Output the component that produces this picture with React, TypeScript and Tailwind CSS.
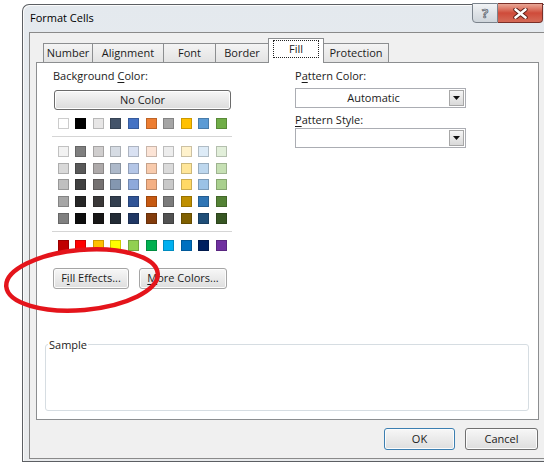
import React from 'react';

// Office theme palette: top row, five tint/shade rows, standard colours
const themeRow = ['#FFFFFF', '#000000', '#E7E6E6', '#44546A', '#4472C4', '#ED7D31', '#A5A5A5', '#FFC000', '#5B9BD5', '#70AD47'];
const shadeRows = [
  ['#F2F2F2', '#7F7F7F', '#D0CECE', '#D6DCE4', '#D9E1F2', '#FCE4D6', '#EDEDED', '#FFF2CC', '#DDEBF7', '#E2EFDA'],
  ['#D9D9D9', '#595959', '#AEAAAA', '#ADB9CA', '#B4C6E7', '#F8CBAD', '#DBDBDB', '#FFE699', '#BDD7EE', '#C6E0B4'],
  ['#BFBFBF', '#404040', '#757171', '#8497B0', '#8EA9DB', '#F4B084', '#C9C9C9', '#FFD966', '#9BC2E6', '#A9D08E'],
  ['#A6A6A6', '#262626', '#3A3838', '#333F4F', '#305496', '#C65911', '#7B7B7B', '#BF8F00', '#2F75B5', '#548235'],
  ['#808080', '#0D0D0D', '#171616', '#222B35', '#203764', '#833C0C', '#525252', '#806000', '#1F4E78', '#375623'],
];
const standardRow = ['#C00000', '#FF0000', '#FFC000', '#FFFF00', '#92D050', '#00B050', '#00B0F0', '#0070C0', '#002060', '#7030A0'];

const tabs = [
  { label: 'Number', cls: 'w-[49px] border-l' },
  { label: 'Alignment', cls: 'w-[71px] border-l' },
  { label: 'Font', cls: 'w-[52px] border-l' },
  { label: 'Border', cls: 'w-[53px] border-l' },
  { label: 'Fill', cls: 'w-[56px]', active: true },
  { label: 'Protection', cls: 'w-[65px] border-r' },
];

const SwatchRow: React.FC<{ colors: string[] }> = ({ colors }) => (
  <div className="flex gap-[6.6px] pl-[4.7px]">
    {colors.map((c, i) => (
      <div key={i} className="w-[11px] h-[11px] border border-black/20" style={{ backgroundColor: c }} />
    ))}
  </div>
);

const Combo: React.FC<{ value?: string }> = ({ value }) => (
  <div className="w-[171px] h-[20px] border border-[#abadb3] bg-white flex items-center">
    <span className="flex-1 text-center text-[11px] pl-[2px]">{value}</span>
    <div className="w-[15px] h-[16px] mr-[1px] border border-[#a7a7a7] bg-gradient-to-b from-[#f6f6f6] to-[#d9d9d9] flex items-center justify-center">
      <svg width="7" height="4" viewBox="0 0 7 4">
        <path d="M0 0 H7 L3.5 4 Z" fill="#111" />
      </svg>
    </div>
  </div>
);

const PushButton: React.FC<{ className?: string; children: React.ReactNode }> = ({ className = '', children }) => (
  <div
    className={`h-[21px] rounded-[3px] border bg-gradient-to-b from-[#f7f7f7] to-[#dedede] shadow-[inset_0_0_0_1px_#fcfcfc] flex items-center justify-center text-[11px] ${className}`}
  >
    {children}
  </div>
);

const App: React.FC = () => {
  return (
    <div className="relative w-[544px] h-[462px] overflow-hidden bg-white pl-[22px] pt-[4px] font-['Open_Sans',sans-serif] text-[#1b1b1b]">
      {/* Window frame */}
      <div className="w-[534px] h-[458px] rounded-tl-[7px] border-l border-t border-b border-[#5c5f63] bg-gradient-to-b from-[#e4e9ee] via-[#eceef0] to-[#e8eaec] shadow-[inset_1px_1px_0_#fbfbfb] px-[6px] flex flex-col">
        {/* Title bar */}
        <div className="h-[27px] flex items-start shrink-0">
          <span className="pl-[1px] mt-[6px] text-[11px] leading-[14px] text-black">Format Cells</span>
          <div className="ml-auto mr-[7px] -mt-[2px] flex">
            <div className="w-[26px] h-[20px] rounded-bl-[4px] border border-[#7b838c] bg-gradient-to-b from-[#f2f4f6] via-[#dfe3e7] to-[#cfd5db] flex items-center justify-center">
              <span className="text-[13px] font-bold leading-none text-[#c3c8cd] [-webkit-text-stroke:0.7px_#58616a]">?</span>
            </div>
            <div className="w-[45px] h-[20px] rounded-br-[4px] border border-l-0 border-[#7a2f28] bg-gradient-to-b from-[#e8a797] via-[#cf4b3a] to-[#d46a57] flex items-center justify-center">
              <svg width="15" height="11" viewBox="0 0 15 11">
                <path d="M2.5 1.5 L12.5 9.5 M12.5 1.5 L2.5 9.5" stroke="#5a1d16" strokeWidth="4.4" strokeLinecap="round" />
                <path d="M2.5 1.5 L12.5 9.5 M12.5 1.5 L2.5 9.5" stroke="#ffffff" strokeWidth="2.6" strokeLinecap="round" />
              </svg>
            </div>
          </div>
        </div>

        {/* Client area */}
        <div className="h-[427px] border border-[#8a8a8a] bg-[#f0f0f0] pl-[6px] pt-[6px] flex flex-col">
          {/* Tabs */}
          <div className="flex items-end h-[23px] pl-[7px]">
            {tabs.map((t) =>
              t.active ? (
                <div
                  key={t.label}
                  className={`${t.cls} relative z-10 -mb-px h-[25px] border-x border-t border-[#8c8e90] bg-white flex justify-center pt-[1px] text-[11px]`}
                >
                  <span className="w-[46px] h-[18px] border border-dotted border-[#222] flex items-center justify-center">
                    {t.label}
                  </span>
                </div>
              ) : (
                <div
                  key={t.label}
                  className={`${t.cls} h-[19px] border-t border-[#8c8e90] bg-gradient-to-b from-[#f4f4f4] to-[#e3e3e3] flex items-center justify-center text-[11px]`}
                >
                  {t.label}
                </div>
              )
            )}
          </div>

          {/* Tab page */}
          <div className="w-[503px] h-[358px] border border-[#8c8e90] bg-white flex flex-col">
            <div className="flex pl-[16px] pt-[6px]">
              {/* Background colour picker */}
              <div className="w-[242px] flex flex-col">
                <span className="text-[11px] leading-[14px]">
                  Background <u className="underline-offset-2">C</u>olor:
                </span>
                <div className="mt-[7px] ml-[1px] w-[177px] h-[20px] rounded-[3px] border border-[#6b6b6b] bg-gradient-to-b from-[#f7f7f7] to-[#dcdcdc] shadow-[inset_0_0_0_1px_#ffffff] flex items-center justify-center text-[11px]">
                  No Color
                </div>
                <div className="mt-[8px]">
                  <SwatchRow colors={themeRow} />
                </div>
                <div className="mt-[7px] -ml-[1px] w-[180px] h-px bg-[#d5d5d5]" />
                <div className="mt-[9px] flex flex-col gap-[5.67px]">
                  {shadeRows.map((row, i) => (
                    <SwatchRow key={i} colors={row} />
                  ))}
                </div>
                <div className="mt-[7px] -ml-[1px] w-[180px] h-px bg-[#d5d5d5]" />
                <div className="mt-[8.3px]">
                  <SwatchRow colors={standardRow} />
                </div>
                <div className="mt-[17px] flex gap-[10px]">
                  <PushButton className="w-[76px] border-[#a5a5a5]">
                    <span>
                      F<u className="underline-offset-2">i</u>ll Effects...
                    </span>
                  </PushButton>
                  <PushButton className="w-[88px] border-[#a5a5a5]">
                    <span>
                      <u className="underline-offset-2">M</u>ore Colors...
                    </span>
                  </PushButton>
                </div>
              </div>

              {/* Pattern settings */}
              <div className="flex flex-col">
                <span className="text-[11px] leading-[14px]">
                  P<u className="underline-offset-2">a</u>ttern Color:
                </span>
                <div className="mt-[5px]">
                  <Combo value="Automatic" />
                </div>
                <span className="mt-[5px] text-[11px] leading-[14px]">
                  <u className="underline-offset-2">P</u>attern Style:
                </span>
                <div className="mt-[1px]">
                  <Combo />
                </div>
              </div>
            </div>

            {/* Sample preview */}
            <fieldset className="mt-[49px] ml-[8px] w-[484px] h-[73px] rounded-[3px] border border-[#d6dde2]">
              <legend className="ml-[2px] px-[1px] text-[11px] leading-[14px]">Sample</legend>
            </fieldset>
          </div>

          {/* Dialog buttons */}
          <div className="mt-[8px] w-[503px] flex justify-end gap-[10px] pr-[1px]">
            <PushButton className="w-[71px] h-[22px] border-[#3c7fb1] shadow-[inset_0_0_0_1px_#c4e5f6]">OK</PushButton>
            <PushButton className="w-[73px] h-[22px] border-[#707070]">Cancel</PushButton>
          </div>
        </div>
      </div>

      {/* Red highlight ring around Fill Effects */}
      <svg className="absolute left-0 top-0 pointer-events-none" width="544" height="462">
        <ellipse cx="82" cy="280" rx="76" ry="30" transform="rotate(-5 82 280)" fill="none" stroke="#e4141b" strokeWidth="4.5" />
      </svg>
    </div>
  );
};

export default App;
